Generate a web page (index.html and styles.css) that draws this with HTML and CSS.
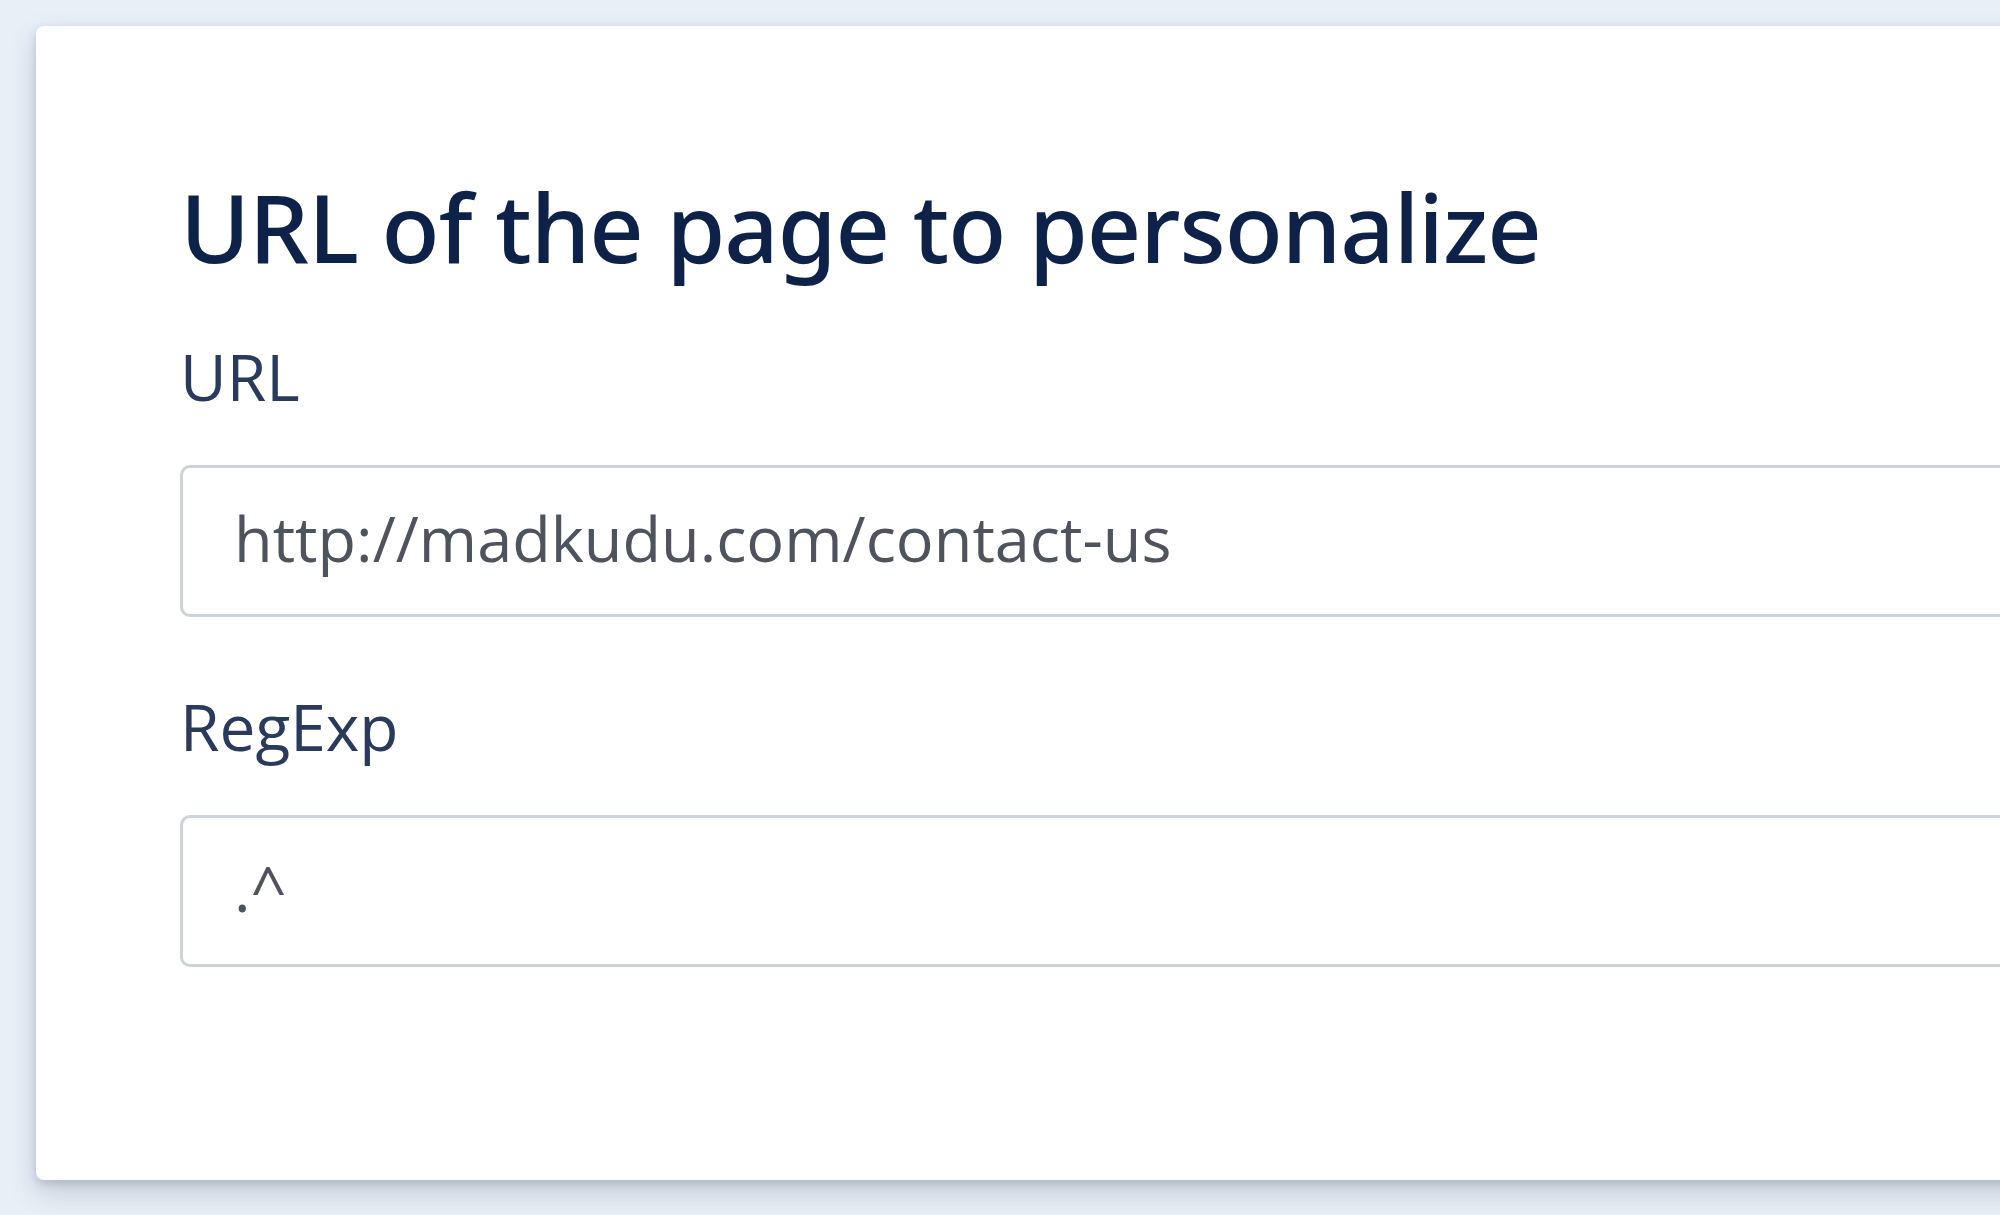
FILE: index.html
```html
<!DOCTYPE html>
<html lang="en">
<head>
<meta charset="utf-8">
<title>URL of the page to personalize</title>
<link rel="stylesheet" href="styles.css">
</head>
<body>
  <main class="page">
    <section class="card">
      <h2 class="card-title">URL of the page to personalize</h2>
      <div class="field">
        <label class="field-label" for="url">URL</label>
        <input class="field-input" id="url" type="text" value="http://madkudu.com/contact-us">
      </div>
      <div class="field">
        <label class="field-label" for="regexp">RegExp</label>
        <input class="field-input" id="regexp" type="text" value=".^">
      </div>
    </section>
  </main>
</body>
</html>
```

FILE: styles.css
```css
html, body {
  margin: 0;
  padding: 0;
  overflow: hidden;
}

body {
  background: #e8eff7;
  font-family: "Open Sans", "Noto Sans", "Liberation Sans", sans-serif;
  width: 2000px;
  height: 1215px;
}

.page {
  padding: 26px 0 0 36px;
}

.card {
  width: 2300px;
  height: 1154px;
  box-sizing: border-box;
  background: #ffffff;
  border-radius: 8px;
  box-shadow: 0 12px 28px rgba(60, 80, 110, 0.22), 0 4px 8px rgba(60, 70, 90, 0.18);
  padding: 140px 0 0 144px;
}

.card-title {
  margin: 0 0 51px 0;
  font-family: "Noto Sans", "Open Sans", sans-serif;
  font-size: 95px;
  line-height: 120px;
  font-weight: 500;
  color: #0e2148;
  letter-spacing: -1px;
}

.field {
  display: flex;
  flex-direction: column;
  gap: 48px;
  margin-bottom: 70px;
}

.field-label {
  font-size: 64px;
  line-height: 80px;
  font-weight: 400;
  color: #2a3a5c;
}

.field-input {
  box-sizing: border-box;
  width: 100%;
  height: 152px;
  border: 3px solid #cdd3db;
  border-radius: 10px;
  padding: 0 51px 8px 51px;
  font-family: inherit;
  font-size: 63px;
  color: #4e545d;
  background: #ffffff;
  outline: none;
}
```
